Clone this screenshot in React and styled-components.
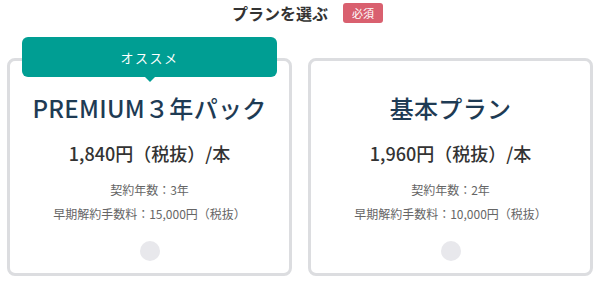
import styled, { createGlobalStyle } from "styled-components";

const GlobalStyle = createGlobalStyle`
  body {
    margin: 0;
    background: #fff;
    font-family: "Noto Sans CJK JP", "Noto Sans", sans-serif;
  }
`;

const plans = [
  {
    id: "premium",
    name: "PREMIUM３年パック",
    price: "1,840円（税抜）/本",
    years: "契約年数：3年",
    fee: "早期解約手数料：15,000円（税抜）",
    recommended: true,
  },
  {
    id: "basic",
    name: "基本プラン",
    price: "1,960円（税抜）/本",
    years: "契約年数：2年",
    fee: "早期解約手数料：10,000円（税抜）",
  },
];

function App() {
  return (
    <Page>
      <GlobalStyle />
      <Heading>
        <HeadingText>プランを選ぶ</HeadingText>
        <Required>必須</Required>
      </Heading>
      <Cards>
        {plans.map((plan) => (
          <Card key={plan.id}>
            {plan.recommended && <Ribbon>オススメ</Ribbon>}
            <PlanName>{plan.name}</PlanName>
            <Price>{plan.price}</Price>
            <Details>
              <li>{plan.years}</li>
              <li>{plan.fee}</li>
            </Details>
            <Radio />
          </Card>
        ))}
      </Cards>
    </Page>
  );
}

const Page = styled.div`
  width: 600px;
  height: 284px;
  padding-top: 3px;
  box-sizing: border-box;
`;

const Heading = styled.div`
  display: flex;
  justify-content: center;
  align-items: center;
  gap: 15px;
  padding-left: 15px;
  height: 20px;
`;

const HeadingText = styled.h2`
  margin: 0;
  font-size: 16px;
  font-weight: 700;
  color: #333;
  line-height: 20px;
`;

const Required = styled.span`
  display: inline-flex;
  align-items: center;
  justify-content: center;
  width: 40px;
  height: 20px;
  border-radius: 3px;
  background: #d9606f;
  color: #fff;
  font-size: 11px;
  line-height: 1;
`;

const Cards = styled.div`
  display: grid;
  grid-template-columns: 1fr 1fr;
  gap: 16px;
  padding: 0 7px;
  margin-top: 35px;
`;

const Card = styled.div`
  position: relative;
  height: 218px;
  box-sizing: border-box;
  border: 3px solid #dcdde0;
  border-radius: 8px;
  display: flex;
  flex-direction: column;
  align-items: center;
  padding-top: 29px;
  background: #fff;
`;

const Ribbon = styled.div`
  position: absolute;
  top: -24px;
  left: 12px;
  width: 255px;
  height: 40px;
  border-radius: 6px;
  background: #009e93;
  color: #fff;
  font-size: 13px;
  letter-spacing: 1.5px;
  display: flex;
  align-items: center;
  justify-content: center;
  &::after {
    content: "";
    position: absolute;
    left: 50%;
    bottom: -5px;
    margin-left: -6px;
    border-left: 6px solid transparent;
    border-right: 6px solid transparent;
    border-top: 6px solid #009e93;
  }
`;

const PlanName = styled.h3`
  margin: 0;
  font-size: 24px;
  line-height: 36px;
  font-weight: 500;
  letter-spacing: 0.3px;
  color: #1e3b54;
`;

const Price = styled.p`
  margin: 12px 0 0;
  font-size: 18px;
  line-height: 30px;
  font-weight: 500;
  color: #333;
`;

const Details = styled.ul`
  list-style: none;
  margin: 10px 0 0;
  padding: 0;
  text-align: center;
  font-size: 12px;
  line-height: 24px;
  color: #666;
`;

const Radio = styled.span`
  margin-top: 15px;
  width: 20px;
  height: 20px;
  border-radius: 50%;
  background: #e8e8ec;
`;

export default App;
